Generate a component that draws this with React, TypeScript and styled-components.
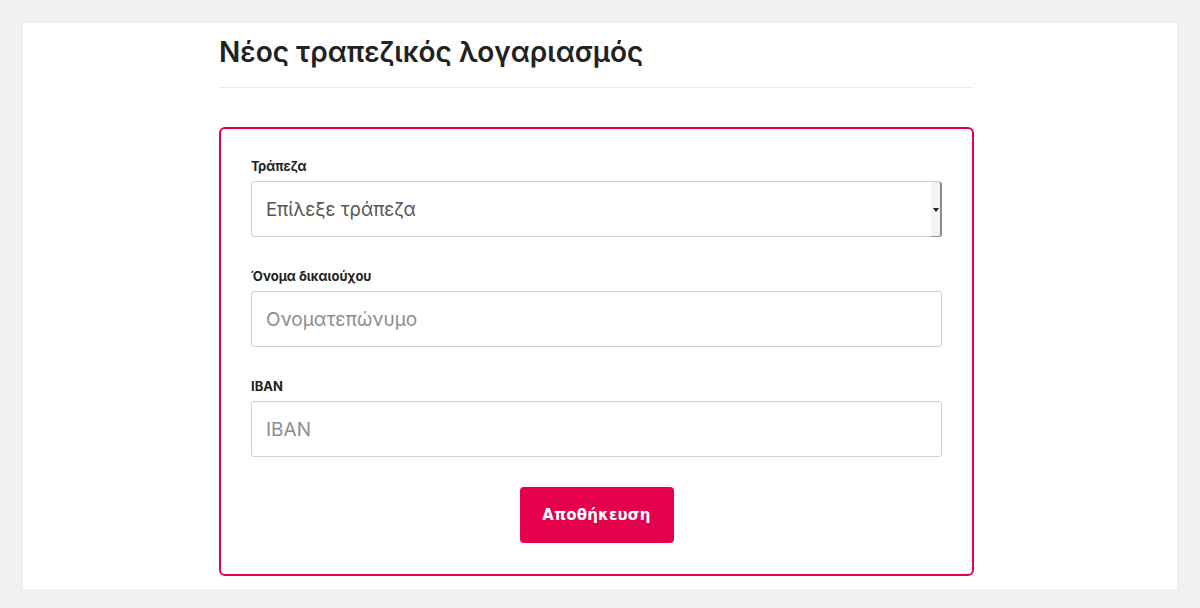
import React from "react";
import styled, { createGlobalStyle } from "styled-components";

const GlobalStyle = createGlobalStyle`
  html, body {
    margin: 0;
    padding: 0;
    background: #f0f0f0;
    font-family: Inter, "Noto Sans", sans-serif;
  }
  * { box-sizing: border-box; }
`;

const Panel = styled.div`
  margin: 23px 23px 20px;
  background: #fff;
  padding: 12px 0 13px;
`;

const Container = styled.div`
  width: 755px;
  margin-left: 196px;
`;

const Title = styled.h1`
  margin: 0;
  padding: 0 0 17px;
  font-size: 28px;
  font-weight: 600;
  line-height: 35px;
  color: #222;
  border-bottom: 1px solid #ececec;
`;

const Card = styled.form`
  margin-top: 39px;
  border: 2px solid #e4004b;
  border-radius: 6px;
  padding: 29px 30px 31px;
  display: flex;
  flex-direction: column;
`;

const Field = styled.div`
  display: flex;
  flex-direction: column;
  margin-bottom: 31px;
`;

const Label = styled.label`
  font-size: 13px;
  font-weight: 700;
  color: #222;
  line-height: 16px;
  margin-bottom: 7px;
`;

const boxStyles = `
  width: 100%;
  height: 56px;
  border: 1px solid #cfcfcf;
  border-radius: 3px;
  background: #fff;
  padding: 0 14px;
  font-family: Inter, "Noto Sans", sans-serif;
  outline: none;
`;

const Input = styled.input`
  ${boxStyles}
  font-size: 19px;
  color: #333;
  &::placeholder {
    color: #8d8d8d;
  }
`;

const SelectWrap = styled.div`
  position: relative;
`;

const Select = styled.select`
  ${boxStyles}
  font-size: 18.5px;
  appearance: none;
  color: #555;
`;

const ArrowStrip = styled.span`
  position: absolute;
  right: 0;
  top: 1px;
  bottom: 0;
  width: 11px;
  background: #f3f3f3;
  border-right: 2px solid #8a8a8a;
  border-bottom: 1px solid #9a9a9a;
  border-radius: 0 3px 3px 0;
  pointer-events: none;

  &::after {
    content: "";
    position: absolute;
    left: 2px;
    top: 26px;
    border-left: 3px solid transparent;
    border-right: 3px solid transparent;
    border-top: 4px solid #222;
  }
`;

const Actions = styled.div`
  display: flex;
  justify-content: center;
  margin-top: -1px;
`;

const SaveButton = styled.button`
  width: 154px;
  height: 56px;
  border: none;
  border-radius: 4px;
  background: #e4004b;
  color: #fff;
  font-family: "DejaVu Sans", Verdana, sans-serif;
  font-size: 15px;
  font-weight: 700;
  letter-spacing: 0.2px;
  cursor: pointer;
`;

export default function App() {
  return (
    <>
      <GlobalStyle />
      <Panel>
        <Container>
          <Title>Νέος τραπεζικός λογαριασμός</Title>
          <Card onSubmit={(e) => e.preventDefault()}>
            <Field>
              <Label>Τράπεζα</Label>
              <SelectWrap>
                <Select defaultValue="">
                  <option value="">Επίλεξε τράπεζα</option>
                </Select>
                <ArrowStrip />
              </SelectWrap>
            </Field>
            <Field>
              <Label>Όνομα δικαιούχου</Label>
              <Input placeholder="Ονοματεπώνυμο" />
            </Field>
            <Field>
              <Label>IBAN</Label>
              <Input placeholder="IBAN" />
            </Field>
            <Actions>
              <SaveButton type="submit">Αποθήκευση</SaveButton>
            </Actions>
          </Card>
        </Container>
      </Panel>
    </>
  );
}
